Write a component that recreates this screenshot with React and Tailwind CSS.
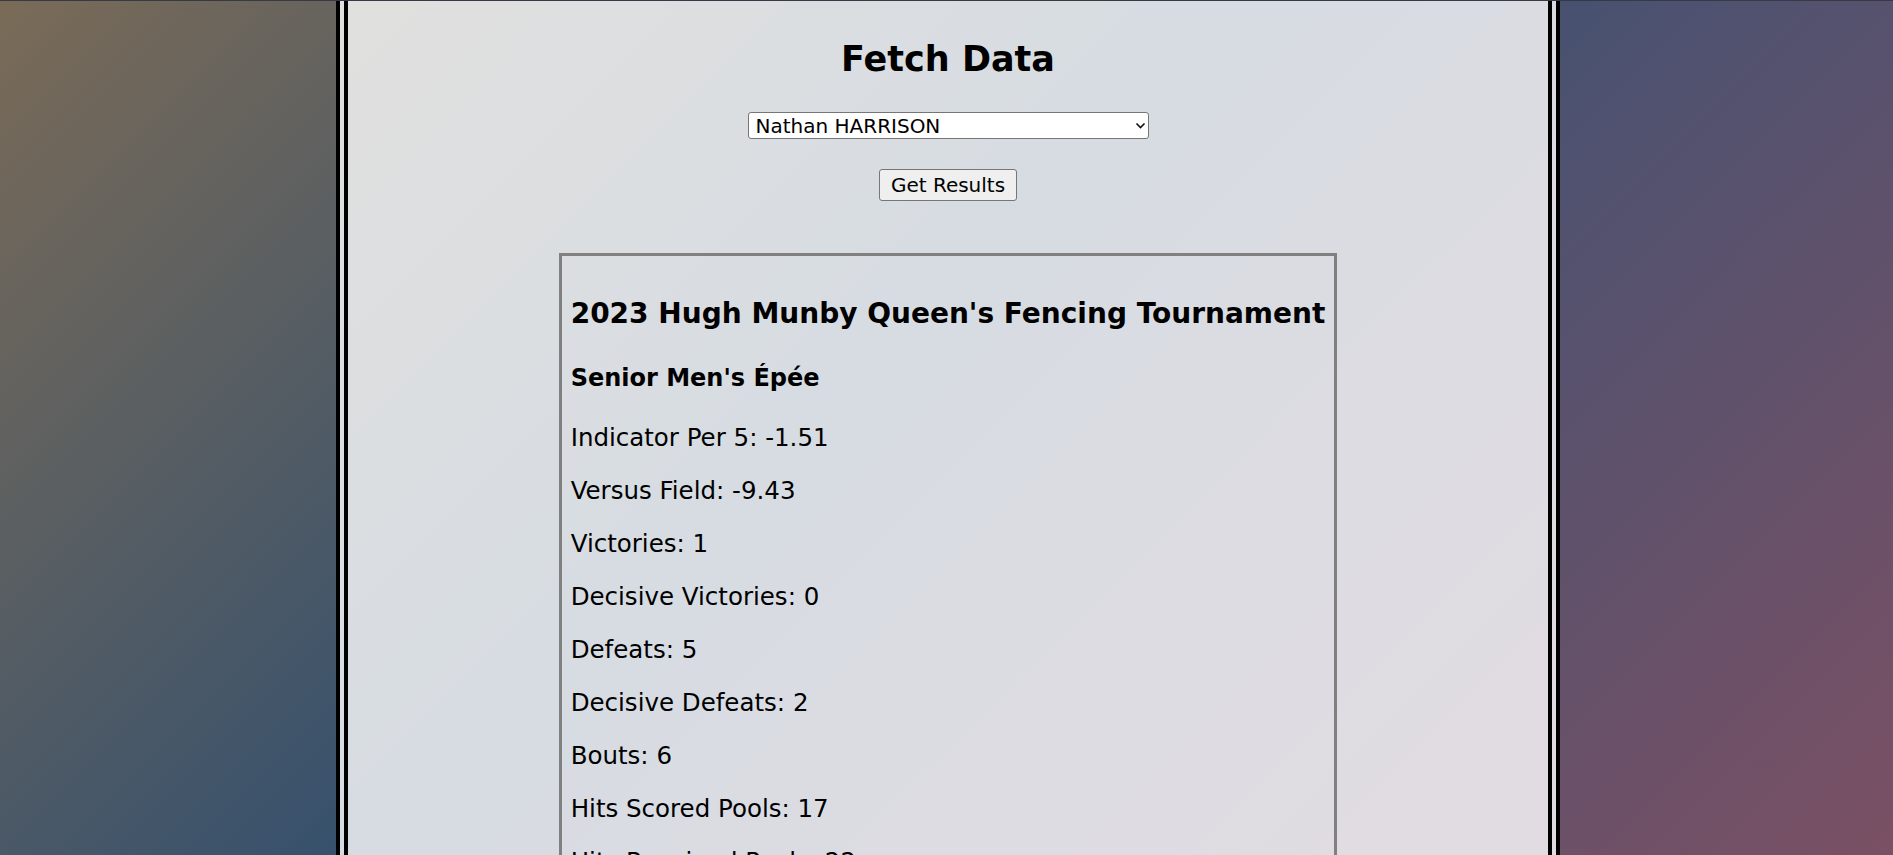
export default function App() {
  const stats = [
    ["Indicator Per 5", "-1.51"],
    ["Versus Field", "-9.43"],
    ["Victories", "1"],
    ["Decisive Victories", "0"],
    ["Defeats", "5"],
    ["Decisive Defeats", "2"],
    ["Bouts", "6"],
    ["Hits Scored Pools", "17"],
    ["Hits Received Pools", "22"],
    ["Indicator Pools", "-5"],
  ];
  return (
    <div className="h-screen overflow-hidden border-t border-[#363a47] bg-[linear-gradient(135deg,#7a6b57_0%,#34506e_45%,#4e5270_62%,#7a5064_100%)] font-['DejaVu_Sans',sans-serif] text-black">
      <div className="ml-[336px] flex h-full w-[1224px] flex-col items-center border-x-[12px] border-double border-black bg-white/80">
        <h1 className="mt-[38px] shrink-0 text-[35px] font-bold leading-[40px]">Fetch Data</h1>

        <div className="relative mt-[33px] h-[27px] w-[401px] shrink-0">
          <select
            defaultValue="nh"
            className="h-[27px] w-full appearance-none rounded-[3px] border border-[#767676] bg-white pl-[7px] text-[20px] leading-none text-black outline-none"
          >
            <option value="nh">Nathan HARRISON</option>
          </select>
          <svg
            className="pointer-events-none absolute right-[3px] top-[10px]"
            width="11"
            height="7"
            viewBox="0 0 11 7"
            fill="none"
          >
            <path d="M1.5 1.5 L5.5 5.5 L9.5 1.5" stroke="#111" strokeWidth="1.6" />
          </svg>
        </div>

        <button className="mt-[30px] h-[32px] shrink-0 rounded-[3px] border border-[#767676] bg-[#efefef] px-[11px] text-[20px] leading-none text-black">
          Get Results
        </button>

        <div className="mt-[52px] shrink-0 border-[3px] border-[#808080] px-[9px] text-left">
          <h2 className="mt-[41px] text-[28px] font-bold leading-[33px]">
            2023 Hugh Munby Queen's Fencing Tournament
          </h2>
          <h3 className="mt-[34px] text-[24px] font-bold leading-[28px]">Senior Men's Épée</h3>
          <div className="mt-[31px] flex flex-col gap-[24px]">
            {stats.map(([k, v]) => (
              <p key={k} className="text-[24.5px] leading-[29px]">
                {k}: {v}
              </p>
            ))}
          </div>
        </div>
      </div>
    </div>
  );
}
